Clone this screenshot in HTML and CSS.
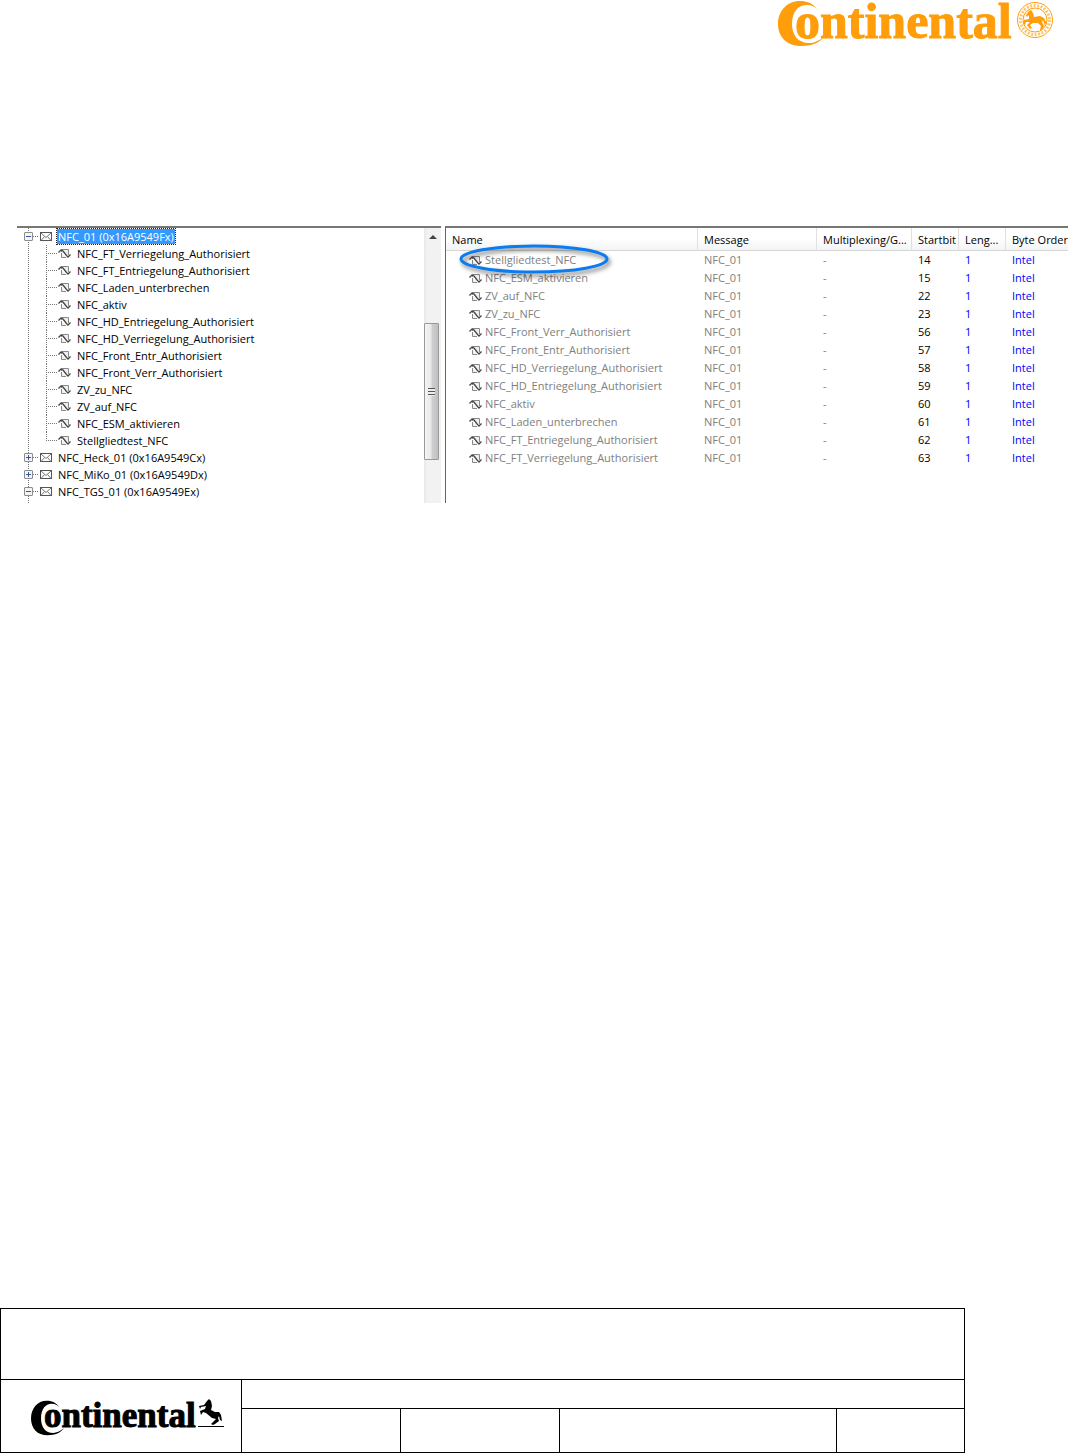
FILE: index.html
```
<!DOCTYPE html>
<html lang="en">
<head>
    <meta charset="UTF-8">
    <meta name="viewport" content="width=device-width, initial-scale=1.0">
    <title>Continental - NFC signals</title>
    <link rel="stylesheet" href="styles.css">
</head>
<body>

    <!-- Shared icons -->
    <svg class="icon-defs" aria-hidden="true">
        <symbol id="icon-signal" viewBox="0 0 13 11">
            <path d="M3.500 4V1.500H10.500V7M8 9.500H3.500V5" fill="#eee" stroke="#888"/>
            <path d="M.5 4.500L3 2L5 3L8.500 7.500L10 9L12.500 6.500" fill="none" stroke="#444" stroke-width="1.300"/>
        </symbol>
        <symbol id="icon-mail" viewBox="0 0 12 10">
            <rect x=".5" y=".5" width="11" height="8" fill="#fff" stroke="#555"/>
            <path d="M1 1L6 5.500L11 1M1 8.500L4.500 4.500M11 8.500L7.500 4.500" fill="none" stroke="#777"/>
        </symbol>
        <!-- Crescent that wraps the first "o" of the wordmark -->
        <symbol id="crescent" viewBox="0 0 46 47" preserveAspectRatio="none">
            <path d="M39 9C35 3 28 1 22 1C9 1 0 11 0 24C0 37 9 46 23 46C34 46 41 43 46 37C40 41 36 43 31 43C20 43 14 35 14 24C14 12 20 5 29 5C34 5 37 7 39 9Z"/>
        </symbol>
    </svg>

    <header>
        <svg class="brand" viewBox="0 0 280 48" role="img" aria-label="Continental">
            <use href="#crescent" width="46" height="47"/>
            <text class="brand-name" x="17" y="38">ontinental</text>
            <circle cx="257" cy="20" r="17.500" fill="none" stroke="#ff9d0a"/>
            <circle cx="257" cy="20" r="14.500" fill="none" stroke="#ff9d0a" stroke-width="3" stroke-dasharray="2 1.500" opacity=".6"/>
            <circle cx="257" cy="20" r="12" fill="#fff" stroke="#ff9d0a"/>
            <path d="M248 15L251 11L253 10L255 13L256 17L262 16L266 18L268 22L267 26L265 20L264 22L266 26L264 30L262 30L263 26L260 23L255 23L252 25L254 28L252 29L249 25L252 22L248 22L247 25L245 24L246 20L251 19L251 15L249 17Z"/>
        </svg>
    </header>

    <main class="explorer">
        <!-- Message tree -->
        <section class="tree-pane">
            <ul class="tree">
                <li>
                    <div class="node">
                        <button class="expander" aria-label="Collapse NFC_01"></button><span class="dots"></span>
                        <svg class="mail"><use href="#icon-mail"/></svg><span class="label selected">NFC_01 (0x16A9549Fx)</span>
                    </div>
                    <ul class="signals" id="signals"></ul>
                </li>
                <li>
                    <div class="node">
                        <button class="expander closed" aria-label="Expand NFC_Heck_01"></button><span class="dots"></span>
                        <svg class="mail"><use href="#icon-mail"/></svg><span class="label">NFC_Heck_01 (0x16A9549Cx)</span>
                    </div>
                </li>
                <li>
                    <div class="node">
                        <button class="expander closed" aria-label="Expand NFC_MiKo_01"></button><span class="dots"></span>
                        <svg class="mail"><use href="#icon-mail"/></svg><span class="label">NFC_MiKo_01 (0x16A9549Dx)</span>
                    </div>
                </li>
                <li>
                    <div class="node">
                        <button class="expander" aria-label="Collapse NFC_TGS_01"></button><span class="dots"></span>
                        <svg class="mail"><use href="#icon-mail"/></svg><span class="label">NFC_TGS_01 (0x16A9549Ex)</span>
                    </div>
                </li>
            </ul>
            <div class="scrollbar">
                <button class="scroll-up" aria-label="Scroll up"></button>
                <div class="thumb"><span class="grip"></span></div>
            </div>
        </section>

        <!-- Signal list -->
        <section class="list-pane">
            <table class="signal-table">
                <colgroup>
                    <col class="col-name"><col class="col-message"><col class="col-mux"><col class="col-bit"><col class="col-bit"><col>
                </colgroup>
                <thead>
                    <tr><th>Name</th><th>Message</th><th>Multiplexing/G...</th><th>Startbit</th><th>Leng...</th><th>Byte Order</th></tr>
                </thead>
                <tbody id="rows"></tbody>
            </table>
            <svg class="marker" viewBox="0 0 156 36" aria-hidden="true">
                <ellipse cx="76" cy="16" rx="73" ry="13"/>
            </svg>
        </section>
    </main>

    <footer>
        <table class="title-block">
            <colgroup>
                <col class="col-logo"><col class="col-a"><col class="col-a"><col class="col-b"><col>
            </colgroup>
            <tr class="row-top"><td colspan="5"></td></tr>
            <tr class="row-mid">
                <td rowspan="2">
                    <svg class="brand-small" viewBox="0 0 196 40" role="img" aria-label="Continental">
                        <use href="#crescent" y="4" width="33" height="36"/>
                        <text class="brand-name" x="13" y="31">ontinental</text>
                        <path d="M167 30.500H193" stroke="#000"/>
                        <path d="M168 10L173 9L176 5L178 3L180 5L181 10L180 14L184 16L188 16L190 19L191 25L189 24L188 20L187 22L188 25L184 28L182 29L180 28L185 23L181 22L175 17L172 16L170 19L169 15L174 13L175 10L170 11L169 13Z"/>
                    </svg>
                </td>
                <td colspan="4"></td>
            </tr>
            <tr class="row-bottom"><td></td><td></td><td></td><td></td></tr>
        </table>
    </footer>

    <script>
        const signals = [
            { name: "Stellgliedtest_NFC", startbit: 14 },
            { name: "NFC_ESM_aktivieren", startbit: 15 },
            { name: "ZV_auf_NFC", startbit: 22 },
            { name: "ZV_zu_NFC", startbit: 23 },
            { name: "NFC_Front_Verr_Authorisiert", startbit: 56 },
            { name: "NFC_Front_Entr_Authorisiert", startbit: 57 },
            { name: "NFC_HD_Verriegelung_Authorisiert", startbit: 58 },
            { name: "NFC_HD_Entriegelung_Authorisiert", startbit: 59 },
            { name: "NFC_aktiv", startbit: 60 },
            { name: "NFC_Laden_unterbrechen", startbit: 61 },
            { name: "NFC_FT_Entriegelung_Authorisiert", startbit: 62 },
            { name: "NFC_FT_Verriegelung_Authorisiert", startbit: 63 },
        ];

        const icon = '<svg class="signal"><use href="#icon-signal"/></svg>';

        document.getElementById('rows').innerHTML = signals.map(s => `
            <tr>
                <td>${icon}${s.name}</td>
                <td>NFC_01</td>
                <td>-</td>
                <td class="startbit">${s.startbit}</td>
                <td class="value">1</td>
                <td class="value">Intel</td>
            </tr>
        `).join('');

        const treeOrder = [63, 62, 61, 60, 59, 58, 57, 56, 23, 22, 15, 14];
        document.getElementById('signals').innerHTML = treeOrder.map(bit => `
            <li>${icon}<span>${signals.find(s => s.startbit === bit).name}</span></li>
        `).join('');
    </script>
</body>
</html>
```
FILE: styles.css
```
* {
    box-sizing: border-box;
}

body {
    margin: 0;
    min-height: 100vh;
    display: flex;
    flex-direction: column;
    background-color: #fff;
    color: #000;
    font-family: "Open Sans", "Noto Sans", sans-serif;
    font-size: 11px;
}

ul {
    list-style: none;
    margin: 0;
    padding: 0;
}

button {
    border: none;
    padding: 0;
    cursor: pointer;
}

svg {
    display: block;
    flex: none;
}

.icon-defs {
    position: absolute;
    width: 0;
    height: 0;
}

header {
    display: flex;
    justify-content: flex-end;
    height: 226px;
    padding-right: 10px;
}

.brand {
    width: 280px;
    height: 48px;
    fill: #ff9d0a;
}

.brand-name {
    font-family: "Liberation Serif", serif;
    font-weight: bold;
    font-size: 50px;
    stroke: #ff9d0a;
    stroke-width: 1px;
}

.explorer {
    display: flex;
    gap: 4px;
    height: 277px;
    padding-left: 17px;
}

/* Tree */
.tree-pane {
    display: flex;
    flex: 0 0 424px;
    border-top: 2px solid #777;
}

.tree {
    flex: 1;
    position: relative;
    padding-left: 7px;
}

.tree::before {
    content: "";
    position: absolute;
    left: 11px;
    top: 0;
    bottom: 0;
    border-left: 1px dotted #777;
}

.node {
    display: flex;
    align-items: center;
    height: 17px;
}

.expander {
    position: relative;
    width: 9px;
    height: 9px;
    border: 1px solid #8c8c8c;
    border-radius: 1px;
    background: linear-gradient(#3a55a5, #3a55a5) center / 5px 1px no-repeat, #f4f4f4;
}

.expander.closed {
    background: linear-gradient(#3a55a5, #3a55a5) center / 5px 1px no-repeat,
        linear-gradient(#3a55a5, #3a55a5) center / 1px 5px no-repeat, #f4f4f4;
}

.dots {
    width: 5px;
    margin-right: 2px;
    border-top: 1px dotted #777;
}

.mail {
    width: 12px;
    height: 10px;
    margin-right: 5px;
}

.label {
    padding: 0 1px;
    line-height: 17px;
}

.label.selected {
    background-color: #3399ff;
    color: #fff;
    line-height: 15px;
    outline: 1px dotted #222;
}

.signals {
    margin-left: 22px;
}

.signals li {
    position: relative;
    display: flex;
    align-items: center;
    gap: 6px;
    height: 17px;
    padding-left: 12px;
}

.signals li::before {
    content: "";
    position: absolute;
    left: 0;
    top: 0;
    height: 100%;
    border-left: 1px dotted #777;
}

.signals li:last-child::before {
    height: 50%;
}

.signals li::after {
    content: "";
    position: absolute;
    left: 0;
    top: 8px;
    width: 11px;
    border-top: 1px dotted #777;
}

.signal {
    width: 13px;
    height: 11px;
}

/* Scrollbar */
.scrollbar {
    width: 17px;
    background: linear-gradient(to right, #e8e8e8, #f2f2f2 20%, #f2f2f2);
}

.scroll-up {
    display: block;
    width: 100%;
    height: 18px;
    background: none;
}

.scroll-up::before {
    content: "";
    display: block;
    width: 0;
    margin: 0 auto;
    border: 4px solid transparent;
    border-top: none;
    border-bottom: 4px solid #444;
}

.thumb {
    display: flex;
    align-items: center;
    justify-content: center;
    width: 15px;
    height: 137px;
    margin-top: 77px;
    border: 1px solid #989898;
    border-radius: 1px;
    background: linear-gradient(to right, #f5f5f5, #e8e8ea 45%, #cfcfd2 55%, #c0c0c4);
}

.grip {
    width: 7px;
    height: 8px;
    background: repeating-linear-gradient(#555 0 1px, #eee 1px 3px);
}

/* Signal list */
.list-pane {
    position: relative;
    flex: 1;
    min-width: 0;
    border-top: 2px solid #777;
    border-left: 1px solid #666;
}

.signal-table {
    width: 100%;
    table-layout: fixed;
    border-collapse: separate;
    border-spacing: 0;
    color: #808080;
    white-space: nowrap;
}

.col-name {
    width: 252px;
}

.col-message {
    width: 119px;
}

.col-mux {
    width: 95px;
}

.col-bit {
    width: 47px;
}

.signal-table th {
    height: 23px;
    padding: 0 0 0 6px;
    border-right: 1px solid #e0e0e0;
    border-bottom: 1px solid #d5d5d5;
    background: linear-gradient(#fff 45%, #f3f4f6);
    color: #000;
    font-weight: normal;
    text-align: left;
}

.signal-table th:last-child {
    border-right: none;
}

.signal-table td {
    height: 18px;
    padding: 0 0 0 6px;
    line-height: 18px;
}

.signal-table td:first-child {
    display: flex;
    align-items: center;
    gap: 3px;
    padding-left: 23px;
}

.signal-table .startbit {
    color: #000;
}

.signal-table .value {
    color: #0000ff;
}

.marker {
    position: absolute;
    left: 12px;
    top: 15px;
    width: 156px;
    height: 36px;
    overflow: visible;
    fill: none;
    stroke: #0a7cf0;
    stroke-width: 3px;
    filter: drop-shadow(2px 3px 2px rgba(0, 0, 0, 0.5));
}

/* Title block */
footer {
    margin-top: auto;
    padding-right: 103px;
}

.title-block {
    width: 100%;
    table-layout: fixed;
    border-collapse: collapse;
}

.title-block td {
    padding: 0;
    border: 1px solid #000;
}

.col-logo {
    width: 241px;
}

.col-a {
    width: 159px;
}

.col-b {
    width: 277px;
}

.row-top {
    height: 71px;
}

.row-mid {
    height: 29px;
}

.row-bottom {
    height: 44px;
}

.brand-small {
    width: 196px;
    height: 40px;
    margin-left: 30px;
}

.brand-small .brand-name {
    font-size: 35px;
    stroke: #000;
}
```
